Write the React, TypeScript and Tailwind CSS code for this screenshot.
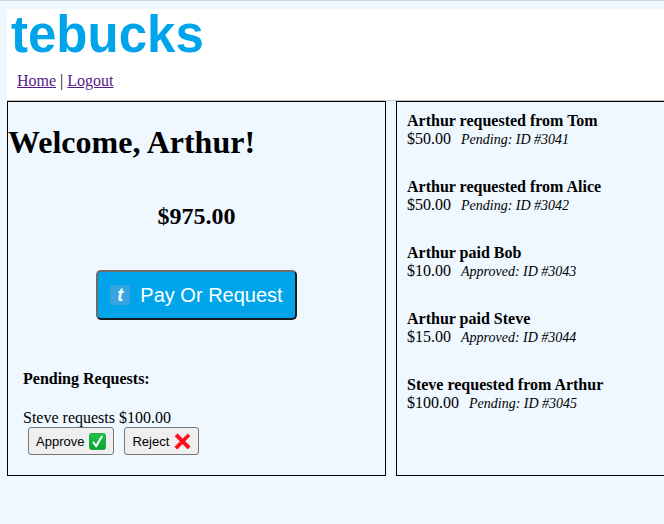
type Transfer = {
  id: number;
  title: string;
  amount: string;
  status: "Pending" | "Approved";
};

const transfers: Transfer[] = [
  { id: 3041, title: "Arthur requested from Tom", amount: "$50.00", status: "Pending" },
  { id: 3042, title: "Arthur requested from Alice", amount: "$50.00", status: "Pending" },
  { id: 3043, title: "Arthur paid Bob", amount: "$10.00", status: "Approved" },
  { id: 3044, title: "Arthur paid Steve", amount: "$15.00", status: "Approved" },
  { id: 3045, title: "Steve requested from Arthur", amount: "$100.00", status: "Pending" },
];

const SANS = "font-['Liberation_Sans',Arial,sans-serif]";

function CheckIcon() {
  return (
    <svg className="size-[17px]" viewBox="0 0 17 17" aria-hidden="true">
      <defs>
        <linearGradient id="check-fill" x1="0" y1="0" x2="0" y2="1">
          <stop offset="0" stopColor="#1fc44a" />
          <stop offset="1" stopColor="#06a62a" />
        </linearGradient>
      </defs>
      <rect x="0.5" y="0.5" width="16" height="16" rx="2" fill="url(#check-fill)" stroke="#149c38" strokeWidth="0.8" />
      <path d="M3.2 9.3 4.8 8.3 7 11.2 12.4 2.6 14 3.3 7.8 14.2 6.6 14.2Z" fill="#fff" />
    </svg>
  );
}

function CrossIcon() {
  return (
    <svg className="size-[17px]" viewBox="0 0 17 17" aria-hidden="true">
      <path
        d="M3.6.8 8.6 6 13.6.9 16 3 10.9 8.3 16.2 13.4 13.7 16 8.5 10.8 3.2 16.2.8 13.8 6.2 8.5 1 3.2Z"
        fill="#fb0d1b"
        stroke="#fb0d1b"
        strokeWidth="0.6"
        strokeLinejoin="round"
      />
    </svg>
  );
}

function Header() {
  return (
    <header className="border-b border-[#c4c4c4] bg-white">
      <div className={`h-[63px] pl-1 text-[51px] leading-[52px] font-bold text-[#00a4ea] ${SANS}`}>tebucks</div>
      <nav className="h-7 pl-[10px] leading-[18px]">
        <a href="#home" className="text-[#551a8b] underline">
          Home
        </a>{" "}
        |{" "}
        <a href="#logout" className="text-[#551a8b] underline">
          Logout
        </a>
      </nav>
    </header>
  );
}

const smallButton = `flex h-7 items-center gap-[5px] rounded-[3px] border border-[#767676] bg-[#efefef] px-[7px] pt-px text-[13px] ${SANS}`;

function AccountPanel() {
  return (
    <section className="border border-black pt-[22px] pb-5">
      <h1 className="text-[32px] leading-[37px] font-bold">Welcome, Arthur!</h1>
      <h2 className="mt-[41px] text-center text-2xl leading-7 font-bold">$975.00</h2>
      <div className="mt-10 flex justify-center">
        <button
          type="button"
          className={`flex h-[50px] items-center gap-[10px] rounded-[5px] border-2 border-t-[#6e6e68] border-r-[#1a1a1a] border-b-[#1a1a1a] border-l-[#6e6e68] bg-[#00a4ea] px-3 text-xl text-white ${SANS}`}
        >
          <span className="flex size-5 items-center justify-center bg-[#35a4e2] text-lg leading-5 font-bold italic">t</span>
          Pay Or Request
        </button>
      </div>
      <div className="mt-[50px] pl-[15px] leading-[18px]">
        <h3 className="font-bold">Pending Requests:</h3>
        <p className="mt-[21px]">Steve requests $100.00</p>
        <div className="flex gap-[10px] pl-[5px]">
          <button type="button" className={smallButton}>
            Approve
            <CheckIcon />
          </button>
          <button type="button" className={smallButton}>
            Reject
            <CrossIcon />
          </button>
        </div>
      </div>
    </section>
  );
}

function TransferPanel() {
  return (
    <section className="border-y border-l border-black py-[10px] pl-[10px]">
      <ul className="flex flex-col gap-[30px]">
        {transfers.map((t) => (
          <li key={t.id} className="leading-[18px]">
            <h4 className="font-bold">{t.title}</h4>
            <div className="flex items-baseline gap-[10px]">
              <span>{t.amount}</span>
              <em className="text-sm leading-4">
                {t.status}: ID #{t.id}
              </em>
            </div>
          </li>
        ))}
      </ul>
    </section>
  );
}

export default function App() {
  return (
    <div className="min-h-screen border-t border-[#d3d5d8] bg-[#eff7ff] pt-2 pl-[7px] font-['Liberation_Serif','Times_New_Roman',serif] text-base text-black">
      <Header />
      <main className="grid grid-cols-[379fr_268fr] gap-[10px]">
        <AccountPanel />
        <TransferPanel />
      </main>
    </div>
  );
}
